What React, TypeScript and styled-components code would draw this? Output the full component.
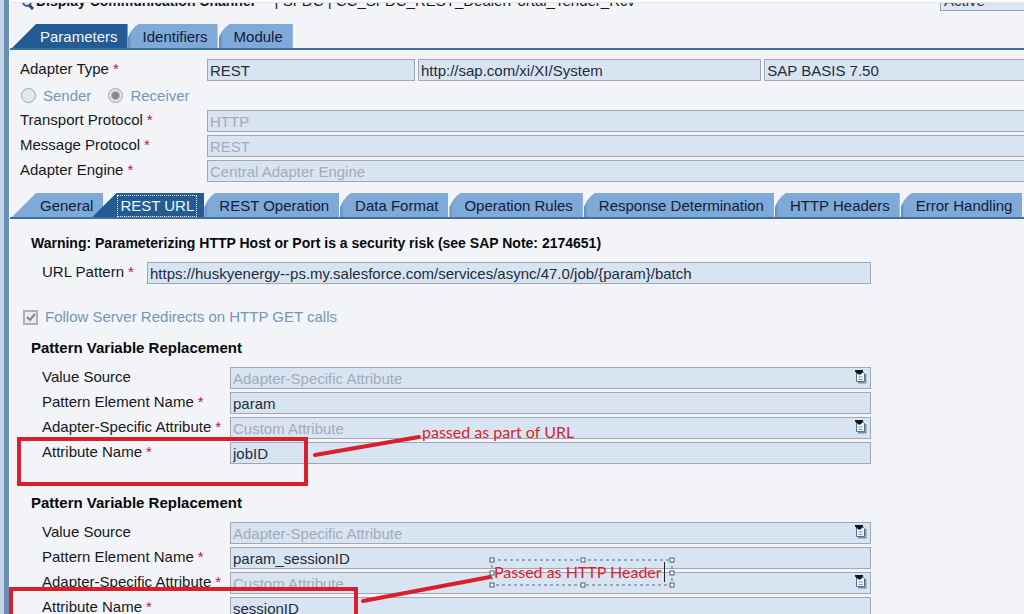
import React from "react";
import styled, { createGlobalStyle, css } from "styled-components";

const GlobalStyle = createGlobalStyle`
  *, *::before, *::after { box-sizing: border-box; }
  body {
    margin: 0;
    background: #f3f4f7;
    color: #15181f;
    font-family: "Liberation Sans", Arial, sans-serif;
    font-size: 15px;
    line-height: 20px;
  }
`;

const RED = "#da1f2c";

const Shell = styled.div`
  position: relative;
  display: flex;
  height: 100vh;
  overflow: hidden;
`;

const Rail = styled.div`
  flex: none;
  width: 10px;
  background: #c5d3e6;
  border-right: 1px solid #fafcff;
  box-shadow: inset -5px 0 0 #6b90b8;
`;

const Main = styled.main`
  flex: 1;
  min-width: 0;
  border-top: 2px solid #ffffff;
`;

const Header = styled.header`
  display: flex;
  align-items: flex-end;
  height: 9px;
  padding-left: 12px;
  overflow: hidden;
  border-top: 1px solid #e2e4e8;
  white-space: nowrap;
`;

const Title = styled.h1`
  margin: 0 20px 0 2px;
  padding-bottom: 1px;
  font-size: 14px;
  line-height: 18px;
`;

const TitleDetail = styled.span`
  padding-bottom: 1px;
  line-height: 18px;
  flex: 1;
`;

const Status = styled.input`
  width: 84px;
  height: 22px;
  padding: 0 3px;
  border: 1px solid #9ba3af;
  border-right: 0;
  background: #dbe5f3;
  font: inherit;
  color: #2a3547;
`;

const TabStrip = styled.div<{ $gap: number }>`
  display: flex;
  height: 26px;
  margin-top: ${(p) => p.$gap}px;
  padding-left: 2px;
  border-bottom: 2px solid #3f6f9f;
  overflow: hidden;
`;

const wideSlope = css`
  clip-path: polygon(24px 0, 100% 0, 100% 100%, 0 100%);
  padding: 2px 10px 0 28px;
`;

const notch = css`
  clip-path: polygon(11px 0, 100% 0, 100% 100%, 0 100%, 0 14px, 3px 8px, 7px 3px);
  padding: 2px 10px 0 15px;
`;

const TabButton = styled.button<{ $active?: boolean; $wide?: boolean; $overlap?: boolean }>`
  flex: none;
  height: 24px;
  border: 0;
  font: inherit;
  white-space: nowrap;
  color: ${(p) => (p.$active ? "#f1f6fc" : "#10203a")};
  background: ${(p) =>
    p.$active ? "#235b94" : p.$wide ? "#7fa9d9" : "linear-gradient(to right, #5f8ab8 0, #7fa9d9 4px)"};
  ${(p) => (p.$wide ? wideSlope : notch)}
  margin-left: ${(p) => (p.$overlap ? "-11px" : "0")};
  margin-right: ${(p) => (p.$wide ? "0" : "1px")};
`;

const FocusText = styled.span`
  display: block;
  margin: 0 -3px;
  padding: 0 2px;
  border: 1px dotted #e6eef8;
`;

const AdapterForm = styled.form`
  display: flex;
  flex-direction: column;
  gap: 3px;
  padding: 9px 0 0 10px;
`;

const Row = styled.div<{ $indent?: boolean }>`
  display: flex;
  align-items: center;
  height: 22px;
  padding-left: ${(p) => (p.$indent ? "11px" : "0")};
`;

const Label = styled.label<{ $width: number }>`
  flex: none;
  width: ${(p) => p.$width}px;
  padding-bottom: 2px;
  white-space: nowrap;
`;

const Required = styled.span`
  margin-left: 4px;
  color: #c4123f;
`;

const FieldGroup = styled.div`
  display: flex;
  flex: 1;
  min-width: 0;
  gap: 3px;
`;

const FieldBox = styled.div<{ $grow?: number; $bleed?: boolean }>`
  display: flex;
  align-items: center;
  flex: ${(p) => p.$grow ?? 1} 1 0;
  min-width: 0;
  height: 22px;
  border: 1px solid #a2a8b2;
  border-right-width: ${(p) => (p.$bleed ? "0" : "1px")};
  background: #d9e4f2;
`;

const TextInput = styled.input`
  flex: 1;
  min-width: 0;
  height: 20px;
  padding: 1px 2px 0;
  border: 0;
  outline: 0;
  background: transparent;
  font: inherit;
  color: #232c3c;
  &:disabled { color: #a3abb7; }
`;

const HelpButton = styled.button`
  display: flex;
  flex: none;
  width: 16px;
  height: 20px;
  padding: 2px 0 0 1px;
  border: 0;
  background: none;
`;

const RadioRow = styled.div`
  display: flex;
  align-items: center;
  gap: 17px;
  height: 23px;
  padding-left: 1px;
`;

const ChoiceLabel = styled.label`
  display: flex;
  align-items: center;
  gap: 7px;
  color: #7397ba;
`;

const Radio = styled.input`
  appearance: none;
  width: 15px;
  height: 15px;
  margin: 0;
  border: 1px solid #a0a3a8;
  border-radius: 50%;
  background: #e2e8ee;
  &:checked { background: radial-gradient(circle, #85888d 0 3px, #e2e6eb 5px); }
`;

const CheckMark = styled.span`
  position: relative;
  display: flex;
  svg { position: absolute; inset: 0; pointer-events: none; }
`;

const CheckBox = styled.input`
  appearance: none;
  width: 15px;
  height: 15px;
  margin: 0;
  border: 2px solid #aeb2b7;
  background: #e9ecf0;
`;

const Panel = styled.section`
  padding: 14px 153px 0 21px;
`;

const Warning = styled.p`
  margin: 0 0 9px;
  font-size: 14px;
  font-weight: bold;
  color: #08090c;
  white-space: nowrap;
`;

const RedirectRow = styled.div`
  display: flex;
  margin: 23px 0 11px -8px;
`;

const Fieldset = styled.fieldset`
  display: flex;
  flex-direction: column;
  gap: 3px;
  min-width: 0;
  margin: 0 0 29px;
  padding: 0;
  border: 0;
`;

const Legend = styled.legend`
  margin-bottom: 9px;
  padding: 0;
  font-weight: bold;
  color: #08090c;
`;

const Markup = styled.div`
  position: absolute;
  inset: 0;
  overflow: hidden;
  pointer-events: none;
  color: ${RED};
  font-family: Lato, "Open Sans", sans-serif;
  font-size: 16px;
  white-space: nowrap;
`;

const Highlight = styled.div<{ $x: number; $y: number; $w: number }>`
  position: absolute;
  left: ${(p) => p.$x}px;
  top: ${(p) => p.$y}px;
  width: ${(p) => p.$w}px;
  height: 49px;
  border: 4px solid ${RED};
`;

const Arrows = styled.svg`
  position: absolute;
  left: 0;
  top: 0;
`;

const Note = styled.span<{ $x: number; $y: number }>`
  position: absolute;
  left: ${(p) => p.$x}px;
  top: ${(p) => p.$y}px;
`;

function HelpIcon() {
  return (
    <svg width="12" height="14" viewBox="0 0 12 14" aria-hidden="true">
      <path d="M3 12.700H10.700V4" fill="none" stroke="#7b8fa6" strokeWidth="1.400" />
      <path d="M1.500 1.500H7.500L9.500 3.500V11.500H1.500Z" fill="#f2f7fc" stroke="#55718f" />
      <path d="M3.500 7H7.500M3.500 9.500H7.500" stroke="#7295b8" />
      <path d="M0 0H8V2L5.500 4.500H3.500L0 1.500Z" fill="#10151e" />
    </svg>
  );
}

type FieldProps = {
  id: string;
  label: string;
  value: string;
  width: number;
  required?: boolean;
  disabled?: boolean;
  help?: boolean;
  bleed?: boolean;
  indent?: boolean;
};

function Field({ id, label, value, width, required, disabled, help, bleed, indent }: FieldProps) {
  return (
    <Row $indent={indent}>
      <Label htmlFor={id} $width={width}>
        {label}
        {required && <Required>*</Required>}
      </Label>
      <FieldBox $bleed={bleed}>
        <TextInput id={id} defaultValue={value} disabled={disabled} readOnly={!disabled} />
        {help && (
          <HelpButton type="button" aria-label={`Choose ${label}`}>
            <HelpIcon />
          </HelpButton>
        )}
      </FieldBox>
    </Row>
  );
}

function Replacement({ prefix, element, attribute }: { prefix: string; element: string; attribute: string }) {
  return (
    <Fieldset>
      <Legend>Pattern Variable Replacement</Legend>
      <Field indent id={`${prefix}-source`} label="Value Source" value="Adapter-Specific Attribute" width={188} disabled help />
      <Field indent id={`${prefix}-element`} label="Pattern Element Name" value={element} width={188} required />
      <Field indent id={`${prefix}-specific`} label="Adapter-Specific Attribute" value="Custom Attribute" width={188} required disabled help />
      <Field indent id={`${prefix}-name`} label="Attribute Name" value={attribute} width={188} required />
    </Fieldset>
  );
}

const innerTabs = [
  "REST Operation",
  "Data Format",
  "Operation Rules",
  "Response Determination",
  "HTTP Headers",
  "Error Handling",
];

const handles = [
  [492, 560], [583, 560], [672, 560],
  [492, 573], [672, 573],
  [492, 585], [583, 585], [672, 585],
];

export default function App() {
  return (
    <>
      <GlobalStyle />
      <Shell>
        <Rail />
        <Main>
          <Header>
            <svg width="12" height="14" viewBox="0 0 12 14" aria-hidden="true">
              <circle cx="5" cy="5" r="4" fill="#dce8f5" stroke="#44608c" strokeWidth="2" />
              <path d="M7 8l4 4" stroke="#283f78" strokeWidth="3" />
            </svg>
            <Title>Display Communication Channel</Title>
            <TitleDetail>| SFDC | CC_SFDC_REST_DealerPortal_Tender_Rcv</TitleDetail>
            <Status aria-label="Status" defaultValue="Active" readOnly />
          </Header>

          <TabStrip role="tablist" aria-label="Channel" $gap={13}>
            <TabButton role="tab" aria-selected $active $wide>Parameters</TabButton>
            <TabButton role="tab">Identifiers</TabButton>
            <TabButton role="tab">Module</TabButton>
          </TabStrip>

          <AdapterForm>
            <Row>
              <Label htmlFor="adapter-type" $width={187}>
                Adapter Type<Required>*</Required>
              </Label>
              <FieldGroup>
                <FieldBox $grow={207}>
                  <TextInput id="adapter-type" defaultValue="REST" readOnly />
                </FieldBox>
                <FieldBox $grow={343}>
                  <TextInput aria-label="Namespace" defaultValue="http://sap.com/xi/XI/System" readOnly />
                </FieldBox>
                <FieldBox $grow={260} $bleed>
                  <TextInput aria-label="Software component" defaultValue="SAP BASIS 7.50" readOnly />
                </FieldBox>
              </FieldGroup>
            </Row>
            <RadioRow>
              <ChoiceLabel>
                <Radio type="radio" name="direction" disabled />
                Sender
              </ChoiceLabel>
              <ChoiceLabel>
                <Radio type="radio" name="direction" defaultChecked disabled />
                Receiver
              </ChoiceLabel>
            </RadioRow>
            <Field id="transport" label="Transport Protocol" value="HTTP" width={187} required disabled bleed />
            <Field id="message" label="Message Protocol" value="REST" width={187} required disabled bleed />
            <Field id="engine" label="Adapter Engine" value="Central Adapter Engine" width={187} required disabled bleed />
          </AdapterForm>

          <TabStrip role="tablist" aria-label="REST adapter" $gap={11}>
            <TabButton role="tab" $wide>General</TabButton>
            <TabButton role="tab" aria-selected $active $wide $overlap>
              <FocusText>REST URL</FocusText>
            </TabButton>
            {innerTabs.map((name) => (
              <TabButton role="tab" key={name}>{name}</TabButton>
            ))}
          </TabStrip>

          <Panel>
            <Warning>Warning: Parameterizing HTTP Host or Port is a security risk (see SAP Note: 2174651)</Warning>
            <Field
              indent
              id="url-pattern"
              label="URL Pattern"
              value="https://huskyenergy--ps.my.salesforce.com/services/async/47.0/job/{param}/batch"
              width={105}
              required
            />
            <RedirectRow>
              <ChoiceLabel>
                <CheckMark>
                  <CheckBox type="checkbox" defaultChecked disabled />
                  <svg width="15" height="15" viewBox="0 0 15 15" aria-hidden="true">
                    <path d="M4 7l3 3 5-6" fill="none" stroke="#85898f" strokeWidth="2" />
                  </svg>
                </CheckMark>
                Follow Server Redirects on HTTP GET calls
              </ChoiceLabel>
            </RedirectRow>
            <Replacement prefix="first" element="param" attribute="jobID" />
            <Replacement prefix="second" element="param_sessionID" attribute="sessionID" />
          </Panel>
        </Main>

        <Markup>
          <Highlight $x={17} $y={437} $w={291} />
          <Highlight $x={9} $y={587} $w={349} />
          <Arrows width="700" height="614" viewBox="0 0 700 614" aria-hidden="true">
            <g stroke={RED} strokeWidth="4" strokeLinecap="round">
              <path d="M315 455L419 437" />
              <path d="M363 601L490 577" />
            </g>
            <rect x="492" y="560" width="180" height="25" fill="none" stroke="#4a7089" strokeDasharray="3 3" />
            {handles.map(([x, y]) => (
              <rect key={`${x}-${y}`} x={x - 2} y={y - 2} width="4" height="4" fill="#ffffff" stroke="#4d5f6d" />
            ))}
            <path d="M664.500 562V582" stroke="#1b2230" />
          </Arrows>
          <Note $x={422} $y={422}>passed as part of URL</Note>
          <Note $x={494} $y={562}>Passed as HTTP Header</Note>
        </Markup>
      </Shell>
    </>
  );
}
